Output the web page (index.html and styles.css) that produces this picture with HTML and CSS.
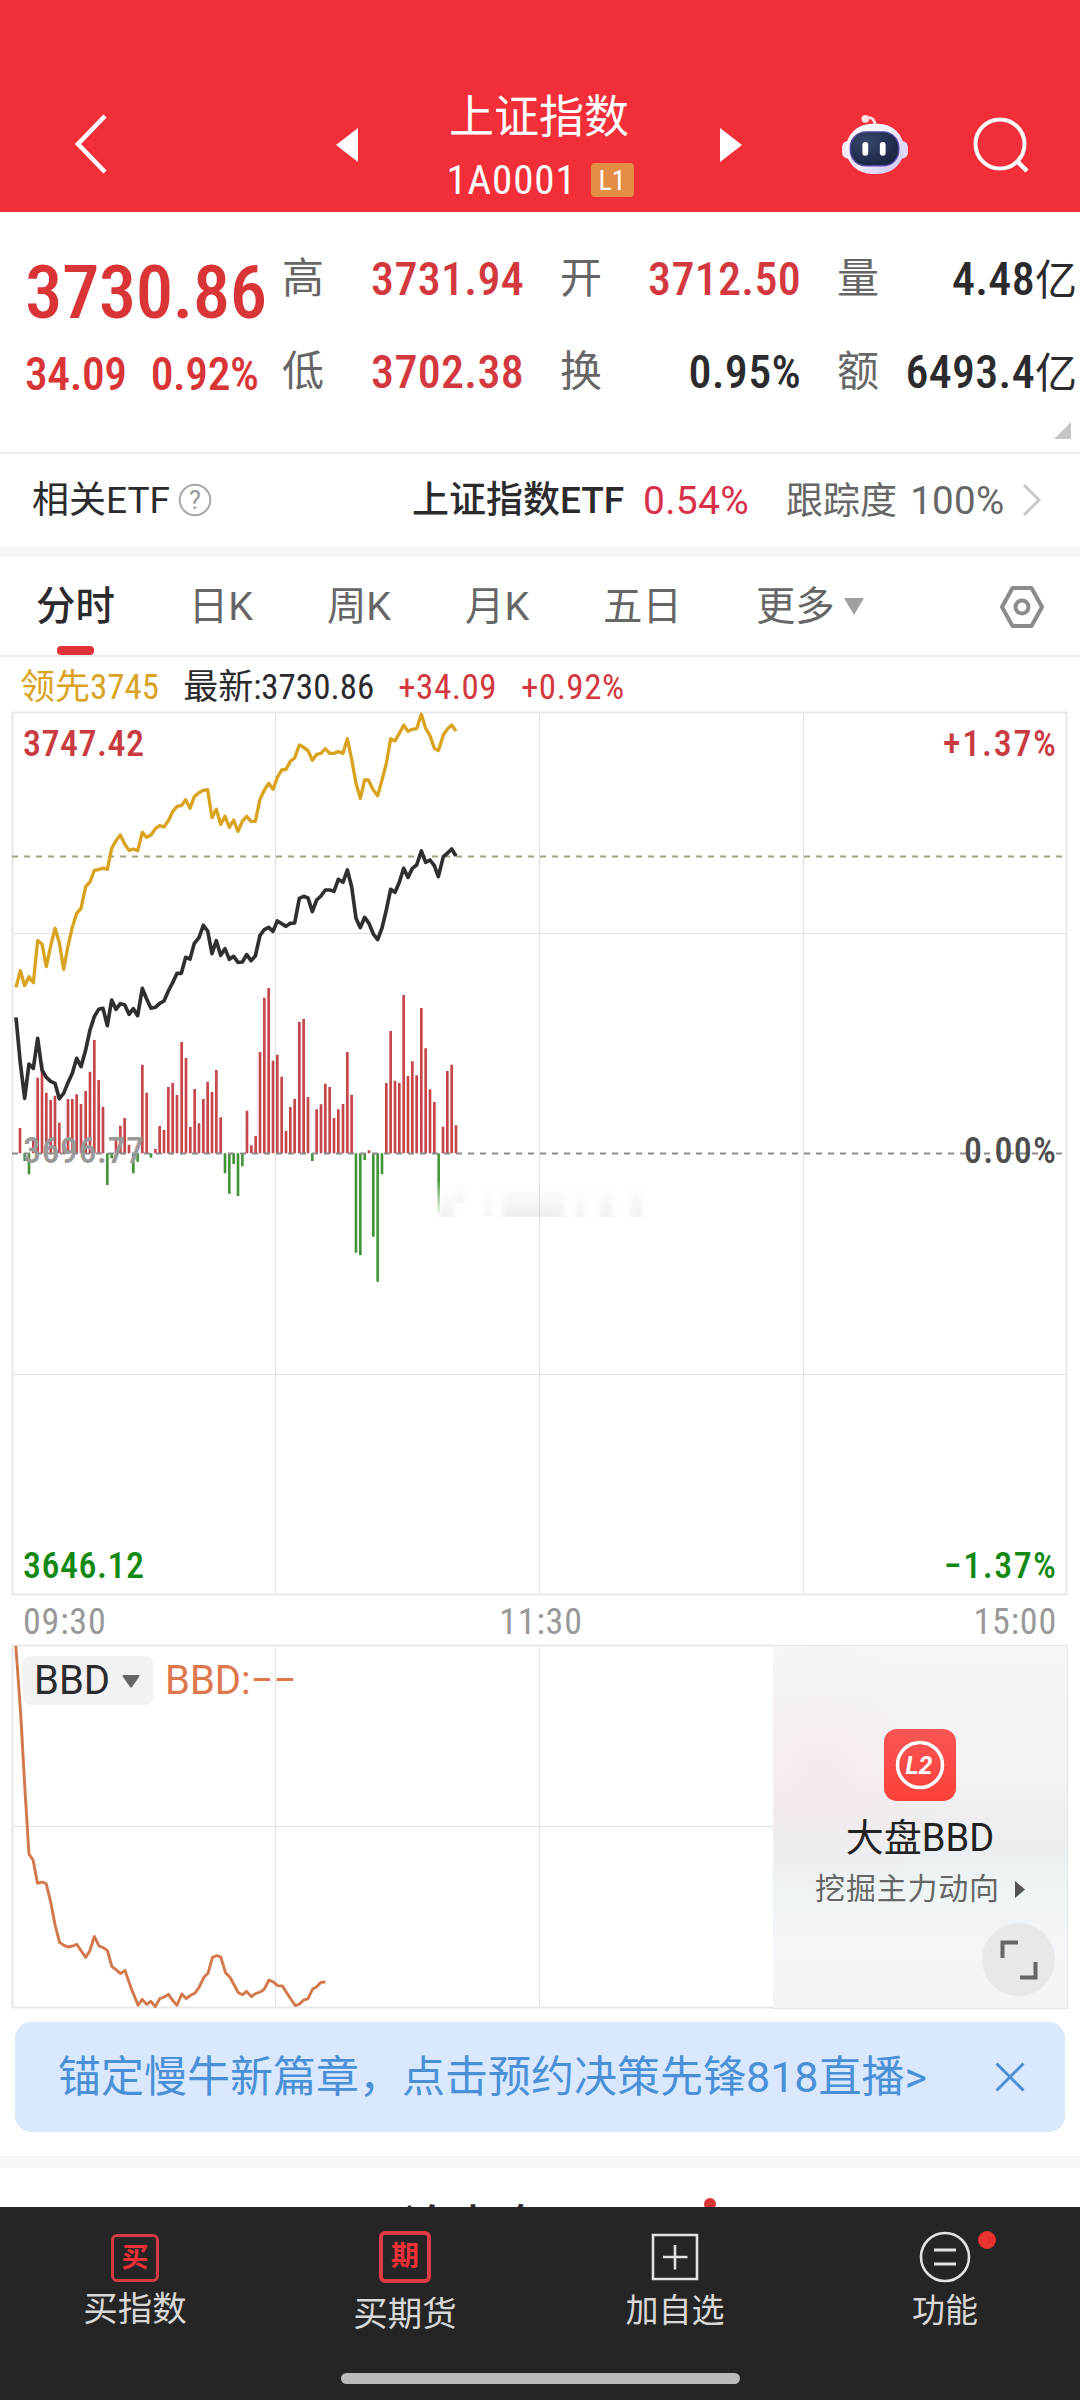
FILE: index.html
```html
<!DOCTYPE html>
<html lang="zh-CN">
<head>
<meta charset="utf-8">
<title>上证指数</title>
<link rel="stylesheet" href="styles.css">
</head>
<body>
<div class="screen">
  <header class="header">
    <div class="header-left">
      <svg width="36" height="62" viewBox="0 0 36 62"><path d="M32 3 5 31 32 59" fill="none" stroke="#fff" stroke-width="4.5"/></svg>
    </div>
    <div class="header-mid">
      <svg width="22" height="34" viewBox="0 0 22 34"><path d="M22 0V34L0 17Z" fill="#fff"/></svg>
      <div class="title-box">
        <h1 class="title">上证指数</h1>
        <div class="code-row"><span class="code">1A0001</span><span class="level">L1</span></div>
      </div>
      <svg width="22" height="34" viewBox="0 0 22 34"><path d="M0 0V34L22 17Z" fill="#fff"/></svg>
    </div>
    <div class="header-right">
      <svg width="66" height="62" viewBox="0 0 68 64">
        <defs>
          <linearGradient id="shell" x1="0" y1="0" x2="1" y2="1"><stop offset="0" stop-color="#fff"/><stop offset=".55" stop-color="#eee9fa"/><stop offset="1" stop-color="#c9bdf5"/></linearGradient>
          <radialGradient id="visor" cx=".35" cy=".3" r=".8"><stop offset="0" stop-color="#38476b"/><stop offset="1" stop-color="#17213f"/></radialGradient>
        </defs>
        <path d="M24 5Q34 3 34 13" fill="none" stroke="#ffd9dd" stroke-width="3"/>
        <circle cx="24" cy="6" r="4" fill="#ffe3e6"/>
        <rect x="0" y="29" width="12" height="18" rx="6" fill="#f7e9f5"/>
        <rect x="56" y="29" width="12" height="18" rx="6" fill="#e3d8f8"/>
        <rect x="4" y="11" width="60" height="52" rx="27" fill="url(#shell)"/>
        <rect x="8.500" y="19.500" width="50" height="35" rx="16" fill="url(#visor)" stroke="#5547a8" stroke-width="1.500"/>
        <rect x="21" y="30" width="6" height="14" rx="3" fill="#fff"/>
        <rect x="39" y="30" width="6" height="14" rx="3" fill="#fff"/>
      </svg>
      <svg width="58" height="58" viewBox="0 0 58 58"><circle cx="28" cy="28" r="24.500" fill="none" stroke="#fff" stroke-width="4"/><path d="M45 45 55 55" stroke="#fff" stroke-width="4.500"/></svg>
    </div>
  </header>

  <section class="quote">
    <div class="price-col">
      <div class="price">3730.86</div>
      <div class="change"><span>34.09</span><span>0.92%</span></div>
    </div>
    <div class="stats">
      <div class="stat"><span class="stat-name">高</span><span class="stat-value up">3731.94</span></div>
      <div class="stat"><span class="stat-name">开</span><span class="stat-value up">3712.50</span></div>
      <div class="stat"><span class="stat-name">量</span><span class="stat-value">4.48<span class="unit">亿</span></span></div>
      <div class="stat"><span class="stat-name">低</span><span class="stat-value up">3702.38</span></div>
      <div class="stat"><span class="stat-name">换</span><span class="stat-value">0.95%</span></div>
      <div class="stat"><span class="stat-name">额</span><span class="stat-value">6493.4<span class="unit">亿</span></span></div>
    </div>
    <svg class="corner" width="17" height="17" viewBox="0 0 17 17"><path d="M17 0V17H0Z" fill="#c4c4c4"/></svg>
  </section>

  <section class="etf">
    <span class="etf-label">相关ETF</span>
    <svg class="help" width="34" height="34" viewBox="0 0 34 34"><circle cx="17" cy="17" r="15.300" fill="none" stroke="#a8a8a8" stroke-width="2"/><text x="17" y="25.500" text-anchor="middle" class="help-mark">?</text></svg>
    <span class="etf-name">上证指数ETF</span>
    <span class="etf-pct">0.54%</span>
    <span class="etf-track">跟踪度 <span class="etf-degree">100%</span></span>
    <svg width="22" height="34" viewBox="0 0 22 34"><path d="M3 2 18 17 3 32" fill="none" stroke="#c8c8c8" stroke-width="3"/></svg>
  </section>

  <nav class="tabs">
    <span class="tab active">分时</span>
    <span class="tab">日K</span>
    <span class="tab">周K</span>
    <span class="tab">月K</span>
    <span class="tab">五日</span>
    <span class="tab more">更多<svg width="20" height="17" viewBox="0 0 20 17"><path d="M0 0H20L10 17Z" fill="#a0a0a0"/></svg></span>
    <svg class="gear" width="46" height="44" viewBox="0 0 46 44"><path d="M13.500 3H32.500L43 22 32.500 41H13.500L3 22Z" fill="none" stroke="#8c8c8c" stroke-width="4" stroke-linejoin="round"/><circle cx="23" cy="22" r="6.500" fill="none" stroke="#8c8c8c" stroke-width="4"/></svg>
  </nav>

  <div class="legend">
    <span class="lead">领先3745</span><span>最新:3730.86</span><span class="up">+34.09</span><span class="up">+0.92%</span>
  </div>

  <svg class="chart" width="1080" height="886" viewBox="0 710 1080 886">
    <defs>
      <linearGradient id="fade" x1="0" y1="0" x2="0" y2="1"><stop offset="0" stop-color="#888" stop-opacity="0"/><stop offset="1" stop-color="#888" stop-opacity=".14"/></linearGradient>
      <linearGradient id="barfade" gradientUnits="userSpaceOnUse" x1="0" y1="600" x2="0" y2="705"><stop offset="0" stop-color="#4a9a3c"/><stop offset="1" stop-color="#4a9a3c" stop-opacity="0"/></linearGradient>
      <filter id="soft" x="-20%" y="-20%" width="140%" height="140%"><feGaussianBlur stdDeviation="3 0"/></filter>
    </defs>
    <path class="grid" d="M275.500 713V1594M539.500 713V1594M803.500 713V1594M13 933.500H1066M13 1374.500H1066"/>
    <rect class="frame" x="12.500" y="712.500" width="1054" height="882"/>
    <path d="M12 856.500H1067" stroke="#a3a37c" stroke-width="2" stroke-dasharray="6 6"/>
    <g class="bars" transform="translate(0 980) scale(.33333)">
      <path class="bar-up" d="M60 520V444M100 520V478M113 520V293M126 520V250M139 520V338M152 520V360M165 520V347M178 520V428M191 520V500M204 520V357M217 520V357M230 520V343M243 520V372M257 520V333M270 520V275M283 520V180M296 520V300M309 520V380M348 520V480M361 520V437M374 520V414M387 520V494M427 520V254M440 520V338M466 520V507M479 520V438M492 520V450M505 520V321M518 520V309M531 520V345M545 520V186M558 520V234M571 520V441M584 520V327M597 520V430M610 520V357M623 520V305M636 520V336M649 520V270M662 520V412M741 520V392M754 520V496M767 520V468M780 520V216M793 520V53M806 520V24M819 520V242M832 520V224M845 520V290M858 520V453M871 520V381M884 520V357M898 520V126M911 520V117M924 520V351M950 520V388M963 520V373M976 520V311M989 520V321M1002 520V414M1015 520V388M1029 520V372M1042 520V216M1055 520V344M1107 520V511M1159 520V309M1172 520V153M1185 520V302M1198 520V309M1211 520V45M1224 520V288M1237 520V244M1250 520V286M1264 520V84M1277 520V205M1290 520V328M1303 520V366M1329 520V440M1342 520V273M1355 520V254M1368 520V436"/>
      <path class="bar-down" d="M74 520V543M87 520V583M322 520V615M335 520V535M400 520V580M413 520V545M453 520V533M675 520V580M688 520V641M701 520V552M714 520V648M727 520V559M937 520V543M1068 520V818M1081 520V826M1094 520V540M1120 520V770M1133 520V905M1146 520V583"/>
      <rect x="1312" y="520" width="8" height="180" fill="url(#barfade)"/>
    </g>
    <path d="M12 1153.500H1067" stroke="#8a8a8a" stroke-width="2" stroke-dasharray="6 6"/>
    <g filter="url(#soft)" fill="url(#fade)">
      <rect x="440" y="1190" width="14" height="27"/><rect x="456" y="1183" width="8" height="20"/><rect x="485" y="1187" width="5" height="29"/><rect x="502" y="1185" width="62" height="32"/><rect x="576" y="1185" width="8" height="32"/><rect x="600" y="1185" width="12" height="32"/><rect x="631" y="1185" width="11" height="32"/>
    </g>
    <g transform="translate(0 700) scale(.33333)" fill="none" stroke-width="10" stroke-linejoin="round">
      <polyline stroke="#d9a21f" points="48,862 61,812 74,857 87,830 100,848 113,722 126,732 139,800 152,738 165,685 178,728 191,808 204,738 217,682 230,640 243,625 257,560 270,546 283,511 296,509 309,504 322,508 335,445 348,422 361,405 374,432 387,451 400,447 413,452 427,397 440,412 453,405 466,386 479,377 492,381 505,362 518,335 531,319 544,317 557,299 570,325 583,290 597,278 610,271 623,269 636,353 649,328 662,373 675,349 688,382 701,360 714,394 727,364 740,349 753,364 766,364 780,298 793,270 806,250 819,268 832,232 845,210 858,208 871,184 884,174 898,135 911,142 924,152 937,181 950,163 963,160 976,146 989,160 1002,160 1015,155 1029,160 1042,116 1055,178 1068,250 1081,295 1094,240 1105,240 1120,270 1133,287 1146,240 1159,190 1172,116 1185,123 1198,100 1211,76 1224,94 1237,88 1250,86 1264,43 1277,85 1290,107 1303,145 1315,152 1330,105 1343,86 1355,75 1368,93"/>
      <polyline stroke="#2f2f31" stroke-width="11" points="48,952 61,1090 74,1195 87,1092 100,1105 113,1015 126,1110 139,1132 152,1144 165,1150 178,1196 191,1180 204,1148 217,1120 230,1075 243,1100 257,1050 270,990 283,950 296,928 309,925 322,977 335,900 348,928 361,911 374,914 387,943 400,926 413,947 427,865 440,897 453,925 466,922 479,910 492,903 505,873 518,848 531,820 544,820 557,772 570,777 583,730 597,713 610,676 623,693 636,761 649,722 662,766 675,746 688,778 701,769 714,787 727,786 740,764 753,782 766,768 780,706 793,689 806,682 819,694 832,663 845,671 858,679 871,670 884,669 898,595 911,589 924,594 937,635 950,600 963,588 976,570 989,570 1002,574 1015,538 1029,547 1042,510 1055,560 1068,655 1081,683 1094,652 1107,670 1120,702 1133,719 1146,684 1159,630 1172,568 1185,577 1198,547 1211,505 1224,532 1237,505 1250,495 1264,453 1277,487 1290,480 1303,497 1315,530 1330,470 1343,459 1355,447 1368,468"/>
    </g>
    <g class="axis">
      <text x="23" y="756" fill="#c93a3f" textLength="121">3747.42</text>
      <text x="1056" y="756" fill="#c93a3f" text-anchor="end" textLength="113">+1.37%</text>
      <text x="23" y="1163" fill="#999" textLength="121">3696.77</text>
      <text x="1056" y="1163" fill="#4d4d4d" text-anchor="end" textLength="92">0.00%</text>
      <text x="23" y="1578" fill="#128a12" textLength="121">3646.12</text>
      <text x="1056" y="1578" fill="#128a12" text-anchor="end" textLength="112">−1.37%</text>
    </g>
  </svg>

  <div class="times"><span>09:30</span><span>11:30</span><span>15:00</span></div>

  <section class="bbd">
    <svg class="bbd-chart" width="773" height="366" viewBox="0 1644 773 366">
      <path class="grid" d="M275.500 1646V2008M539.500 1646V2008M13 1826.500H773"/>
      <path class="frame" d="M773 1645.500H12.500V2007.500H773"/>
      <polyline transform="translate(0 1540) scale(.34436 .33333)" fill="none" stroke="#d2784b" stroke-width="8.500" stroke-linejoin="round" points="46,318 60,520 72,740 84,942 96,960 109,1030 122,1026 134,1031 147,1085 160,1155 173,1207 186,1216 198,1221 211,1218 223,1213 236,1233 249,1252 261,1232 274,1189 287,1217 300,1223 312,1232 325,1280 338,1290 350,1301 363,1291 381,1345 401,1396 413,1378 426,1393 438,1384 451,1400 464,1376 477,1371 489,1363 502,1382 514,1396 528,1362 541,1376 553,1366 566,1360 579,1340 592,1312 604,1300 617,1252 630,1247 641,1251 655,1298 668,1312 680,1335 692,1358 705,1364 716,1354 730,1370 743,1360 756,1356 767,1348 781,1320 794,1326 806,1337 820,1338 840,1370 858,1397 870,1392 882,1380 894,1377 908,1347 919,1341 932,1327 945,1326"/>
    </svg>
    <div class="bbd-head">
      <span class="bbd-tag">BBD<svg width="18" height="13" viewBox="0 0 18 13"><path d="M1 0H17Q18 1 17 2L10 12Q9 13 8 12L1 2Q0 1 1 0Z" fill="#666"/></svg></span>
      <span class="bbd-value">BBD:−−</span>
    </div>
    <div class="promo">
      <svg class="promo-icon" width="72" height="72" viewBox="0 0 72 72">
        <defs><linearGradient id="l2" x1="0" y1="0" x2="0" y2="1"><stop offset="0" stop-color="#f95555"/><stop offset="1" stop-color="#fb4039"/></linearGradient></defs>
        <rect width="72" height="72" rx="13" fill="url(#l2)"/>
        <circle cx="36" cy="36" r="22.500" fill="none" stroke="#fff" stroke-width="3.500"/>
        <text x="35" y="45" text-anchor="middle" class="l2-text">L2</text>
      </svg>
      <div class="promo-title">大盘BBD</div>
      <div class="promo-sub">挖掘主力动向<svg width="10" height="17" viewBox="0 0 10 17"><path d="M0 0 10 8.500 0 17Z" fill="#555"/></svg></div>
      <div class="expand"><svg width="38" height="40" viewBox="0 0 38 40"><path d="M2.500 18V2.500H18M20 37.500H35.500V22" fill="none" stroke="#666" stroke-width="4"/></svg></div>
    </div>
  </section>

  <section class="banner">
    <span>锚定慢牛新篇章，点击预约决策先锋818直播&gt;</span>
    <svg width="30" height="30" viewBox="0 0 30 30"><path d="M1.500 1.500 28.500 28.500M28.500 1.500 1.500 28.500" stroke="#4a90d9" stroke-width="3"/></svg>
  </section>

  <section class="next"><span class="next-title">论大盘</span><i class="next-dot"></i></section>

  <footer class="bottom">
    <div class="actions">
      <div class="action">
        <span class="box box-buy">买</span>
        <span class="name name-buy">买指数</span>
      </div>
      <div class="action">
        <span class="box box-future">期</span>
        <span class="name name-future">买期货</span>
      </div>
      <div class="action">
        <svg class="glyph" width="52" height="52" viewBox="0 0 52 52"><path d="M4 4H48V48H4ZM26 14V38.500M14 26H38.500" fill="none" stroke="#e2e2e2" stroke-width="2.600"/></svg>
        <span class="name">加自选</span>
      </div>
      <div class="action">
        <svg class="glyph" width="52" height="52" viewBox="0 0 52 52"><circle cx="26" cy="26" r="24" fill="none" stroke="#e2e2e2" stroke-width="2.600"/><path d="M15 19H37M15 33H37" stroke="#e2e2e2" stroke-width="3"/></svg>
        <span class="name">功能</span>
        <i class="badge"></i>
      </div>
    </div>
    <div class="home-bar"></div>
  </footer>
</div>
</body>
</html>
```
FILE: styles.css
```css
* { box-sizing: border-box; }
body { margin: 0; background: #fff; }
svg { display: block; flex: none; }
.screen {
  width: 1080px; height: 2400px; overflow: hidden;
  display: flex; flex-direction: column;
  font-family: "Roboto", "Noto Sans CJK SC", sans-serif;
  color: #2b2b2d; white-space: nowrap;
}
.screen > * { flex: none; }
.up { color: #d2383d; }

.header {
  height: 212px; background: #f22f39; color: #fff;
  display: grid; grid-template-columns: 320px 440px 320px;
}
.header-left { padding: 113px 0 0 73px; }
.header-mid { display: flex; justify-content: space-between; padding: 85px 18px 0 16px; }
.header-mid > svg { margin-top: 43px; }
.title-box { display: flex; flex-direction: column; align-items: center; gap: 6px; }
.title { margin: 0; font-size: 45px; font-weight: 400; line-height: 66px; }
.code-row { display: flex; align-items: center; gap: 14px; height: 46px; padding-left: 2px; }
.code { font: 400 41px/44px "Roboto Condensed", sans-serif; letter-spacing: .9px; }
.level {
  width: 43px; height: 34px; border-radius: 4px; background: #e38d45;
  font: 400 28px/35px "Roboto Condensed", sans-serif; text-align: center;
}
.header-right { display: flex; padding: 113px 0 0 82px; gap: 64px; }
.header-right svg:last-child { margin-top: 3px; }

.quote { height: 242px; border-bottom: 2px solid #ececec; display: flex; position: relative; }
.price-col { width: 282px; padding: 40px 0 0 25px; color: #d93436; font-family: "Roboto Condensed", sans-serif; }
.price { font-size: 75px; font-weight: 500; line-height: 80px; letter-spacing: -.6px; }
.change { display: flex; gap: 24px; margin-top: 18px; font-size: 45.500px; line-height: 50px; font-weight: 500; letter-spacing: -.4px; }
.stats {
  display: grid; grid-template-columns: 242px 241px 240px; grid-auto-rows: 50px;
  column-gap: 36px; row-gap: 43px; padding-top: 42px;
}
.stat { display: flex; justify-content: space-between; line-height: 50px; }
.stat-name { font-size: 42px; color: #666; }
.stat-value { font-family: "Roboto Condensed", "Noto Sans CJK SC", sans-serif; font-size: 46px; font-weight: 500; letter-spacing: .3px; }
.unit { font-size: 42px; font-weight: 400; letter-spacing: 0; }
.corner { position: absolute; right: 9px; bottom: 13px; }

.etf { height: 92px; display: flex; align-items: center; padding: 0 37px 0 32px; font-size: 37px; line-height: 92px; }
.etf-label { padding-top: 2px; width: 137px; }
.help { margin: 0 200px 0 9px; }
.help-mark { font: 400 25px "Roboto", sans-serif; fill: #999; }
.etf-name { font-weight: 500; padding-top: 2px; width: 231px; }
.etf-pct { color: #d9304a; font-size: 39px; width: 143px; padding-top: 2px; letter-spacing: .3px; }
.etf-track { color: #666; width: 235px; padding-top: 2px; word-spacing: 4px; }
.etf-degree { font-size: 38.500px; letter-spacing: .3px; }

.tabs {
  height: 111px; border-top: 11px solid #f5f5f5; border-bottom: 2px solid #ececec;
  display: flex; gap: 74px; padding: 0 35px 0 36px; font-size: 39.400px; color: #666;
}
.tab { line-height: 99px; position: relative; }
.tab.active { color: #2b2b2d; font-weight: 500; }
.tab.active::after {
  content: ""; position: absolute; left: 21px; bottom: 0; width: 37px; height: 9px;
  border-radius: 4px; background: #e03338;
}
.more { display: flex; align-items: center; gap: 9px; }
.gear { margin: 28px 0 0 auto; }

.legend {
  height: 53px; padding: 5px 0 0 20px; display: flex;
  font: 400 35px/52px "Roboto Condensed", "Noto Sans CJK SC", sans-serif; gap: 24px;
}
.legend .up { letter-spacing: .5px; }
.lead { color: #d9a21f; }

.grid { fill: none; stroke: #e0e0e0; stroke-width: 1; }
.frame { fill: none; stroke: #e8e8e8; stroke-width: 2; }
.bar-up { stroke: #c64649; stroke-width: 8; }
.bar-down { stroke: #43953a; stroke-width: 8; }
.axis { font: 500 36px "Roboto Condensed", sans-serif; }

.times {
  height: 48px; padding: 0 23px; display: flex; justify-content: space-between;
  font: 400 36px/52px "Roboto Condensed", sans-serif; color: #999; letter-spacing: .8px;
}
.times span:nth-child(2) { padding-left: 2px; }

.bbd { height: 366px; display: flex; position: relative; }
.bbd-head { position: absolute; left: 23px; top: 12px; display: flex; gap: 12px; font-size: 40px; line-height: 50px; }
.bbd-tag { display: flex; align-items: center; justify-content: space-between; width: 130px; height: 49px; padding: 1px 13px 0 11px; border-radius: 7px; background: #f2f2f2; }
.bbd-value { color: #df774d; }
.promo {
  width: 295px; height: 364px; margin-top: 1px; border: 1px solid #e6e6e6; border-left: 0;
  background: radial-gradient(circle at 17% 35%, rgba(246, 224, 231, .45), rgba(246, 224, 231, 0) 38%),
    linear-gradient(#f5f5f5 0%, #f5f3f4 35%, #f1eeef 45%, #ebeff1 57%, #eff4f5 68%, #f4f5f8 85%, #f5f3f4 100%);
  display: flex; flex-direction: column; align-items: center; position: relative;
}
.promo-icon { margin-top: 83px; }
.l2-text { font: italic 700 25px "Roboto", sans-serif; fill: #fff; }
.promo-title { font-size: 38px; line-height: 50px; margin-top: 12px; color: #222; }
.promo-sub { display: flex; align-items: center; gap: 15px; font-size: 30px; line-height: 44px; letter-spacing: .8px; color: #666; margin-top: 4px; }
.expand {
  position: absolute; right: 12px; bottom: 12px; width: 73px; height: 73px; border-radius: 50%;
  background: #e8e8e8; display: flex; align-items: center; justify-content: center;
}

.banner {
  height: 110px; margin: 12px 15px 24px; padding: 0 40px 0 43px; border-radius: 16px; background: #d9e8fc;
  color: #4a90d9; font-size: 43px; line-height: 112px; display: flex; justify-content: space-between; align-items: center;
}
.next { height: 51px; border-top: 12px solid #f5f5f5; overflow: hidden; position: relative; display: flex; padding-left: 402px; }
.next-title { font-size: 46px; font-weight: 500; letter-spacing: 2px; line-height: 70px; margin-top: 24px; }
.next-dot { position: absolute; left: 704px; top: 30px; width: 12px; height: 12px; border-radius: 50%; background: #d93436; }

.bottom { height: 193px; background: #252525; color: #d8d8d8; }
.actions { height: 166px; display: grid; grid-template-columns: repeat(4, 1fr); }
.action { display: flex; flex-direction: column; align-items: center; padding-top: 24px; position: relative; }
.box { display: grid; place-items: center; color: #ee3038; border: 3px solid #d33a43; font-weight: 700; }
.box-buy { width: 48px; height: 48px; margin-top: 3px; border-radius: 6px; font-size: 27px; line-height: 40px; }
.box-future { width: 52px; height: 52px; border: 4px solid #de3a43; border-radius: 6px; font-size: 28px; line-height: 42px; }
.name { font-size: 33px; line-height: 44px; margin-top: 6px; }
.name-buy { font-size: 34.500px; margin-top: 5px; }
.name-future { font-size: 34.500px; margin-top: 9px; }
.badge { position: absolute; left: 168px; top: 24px; width: 18px; height: 18px; border-radius: 50%; background: #ea322f; }
.home-bar { width: 399px; height: 11px; border-radius: 6px; background: #bbb; margin: 0 auto; }
```
